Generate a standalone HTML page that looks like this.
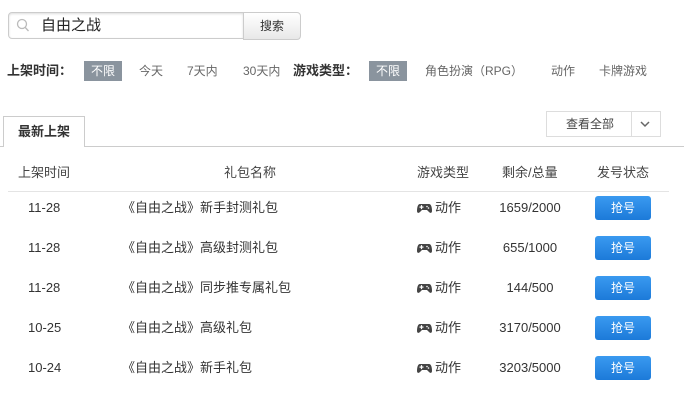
<!DOCTYPE html><html><head><meta charset="utf-8"><style>
body{margin:0;width:684px;height:400px;background:#fff;font-family:"Liberation Sans","Noto Sans CJK SC",sans-serif;color:#333;position:relative;overflow:hidden}
.a{position:absolute;white-space:nowrap}
.search{left:8px;top:12px;width:236px;height:27px;border:1px solid #ccc;border-radius:4px 0 0 4px;box-sizing:border-box;box-shadow:inset 0 1px 2px #ddd}
.btn{left:243px;top:12px;width:58px;height:28px;border:1px solid #ccc;border-radius:0 4px 4px 0;box-sizing:border-box;background:linear-gradient(#fff,#e8e8e8);font-size:12px;text-align:center;line-height:26px}
.f{top:61px;font-size:12px;color:#666;line-height:20px;height:20px}
.sel{background:#8a949e;color:#fff;padding:0 7px}
.b{font-weight:bold;color:#333;font-size:13px}
.tab{left:3px;top:116px;width:82px;height:31px;border:1px solid #ccc;border-bottom:none;background:#fff;box-sizing:border-box;font-size:13px;font-weight:bold;text-align:center;line-height:29px;z-index:2}
.hd{top:163px;font-size:13px;color:#444;line-height:20px}
.r{font-size:13px;color:#333;line-height:20px;height:20px}
.gb{width:56px;height:24px;background:linear-gradient(#3a9af0,#1c7ad9);border-radius:3px;color:#fff;font-size:12px;text-align:center;line-height:24px;left:595px}
</style></head><body>
<div class="a search"></div>
<svg class="a" style="left:16px;top:18px" width="14" height="15" viewBox="0 0 14 15"><circle cx="6" cy="6" r="4.5" fill="none" stroke="#bbb" stroke-width="1.3"/><line x1="9.3" y1="9.5" x2="12.5" y2="13" stroke="#bbb" stroke-width="1.3"/></svg>
<div class="a" style="left:41px;top:16px;font-size:15px;color:#222;line-height:20px">自由之战</div>
<div class="a btn">搜索</div>
<div class="a f b" style="left:7px">上架时间：</div>
<div class="a f sel" style="left:84px">不限</div>
<div class="a f" style="left:139px">今天</div>
<div class="a f" style="left:187px">7天内</div>
<div class="a f" style="left:243px">30天内</div>
<div class="a f b" style="left:293px">游戏类型：</div>
<div class="a f sel" style="left:369px">不限</div>
<div class="a f" style="left:425px">角色扮演（RPG）</div>
<div class="a f" style="left:551px">动作</div>
<div class="a f" style="left:599px">卡牌游戏</div>
<div class="a tab">最新上架</div>
<div class="a" style="left:0;top:146px;width:684px;height:1px;background:#ccc"></div>
<div class="a" style="left:546px;top:111px;width:115px;height:26px;border:1px solid #ddd;box-sizing:border-box"></div>
<div class="a" style="left:631px;top:111px;width:1px;height:26px;background:#ddd"></div>
<div class="a" style="left:566px;top:114px;font-size:12px;color:#444;line-height:20px">查看全部</div>
<svg class="a" style="left:640px;top:120px" width="10" height="8"><path d="M1 2l4 4 4-4" fill="none" stroke="#666" stroke-width="1.5"/></svg>
<div class="a hd" style="left:18px">上架时间</div>
<div class="a hd" style="left:224px">礼包名称</div>
<div class="a hd" style="left:417px">游戏类型</div>
<div class="a hd" style="left:502px">剩余/总量</div>
<div class="a hd" style="left:597px">发号状态</div>
<div class="a" style="left:8px;top:191px;width:661px;height:1px;background:#e4e4e4"></div>
<div id="rows"></div>
<script>
var d=[["11-28","新手封测礼包","1659/2000"],["11-28","高级封测礼包","655/1000"],["11-28","同步推专属礼包","144/500"],["10-25","高级礼包","3170/5000"],["10-24","新手礼包","3203/5000"]];
var h="";d.forEach(function(x,i){var y=198+i*40;
h+='<div class="a r" style="left:28px;top:'+y+'px">'+x[0]+'</div>'+
'<div class="a r" style="left:122px;top:'+y+'px">《自由之战》'+x[1]+'</div>'+
'<svg class="a" style="left:417px;top:'+(y+5)+'px" width="15" height="11" viewBox="0 0 15 11"><path d="M3 1h9c2 0 3 3 3 7 0 2-1.5 2.5-3 1l-2-2H5L3 9C1.5 10.5 0 10 0 8 0 4 1 1 3 1z" fill="#444"/><rect x="2.5" y="3.5" width="4" height="1.2" fill="#fff"/><rect x="3.9" y="2.1" width="1.2" height="4" fill="#fff"/><circle cx="10" cy="3.5" r=".8" fill="#fff"/><circle cx="11.5" cy="5" r=".8" fill="#fff"/></svg>'+
'<div class="a r" style="left:435px;top:'+y+'px">动作</div>'+
'<div class="a r" style="left:530px;top:'+y+'px;transform:translateX(-50%)">'+x[2]+'</div>'+
'<div class="a gb" style="top:'+(y-2)+'px">抢号</div>';});
document.getElementById("rows").innerHTML=h;
</script>
</body></html>
